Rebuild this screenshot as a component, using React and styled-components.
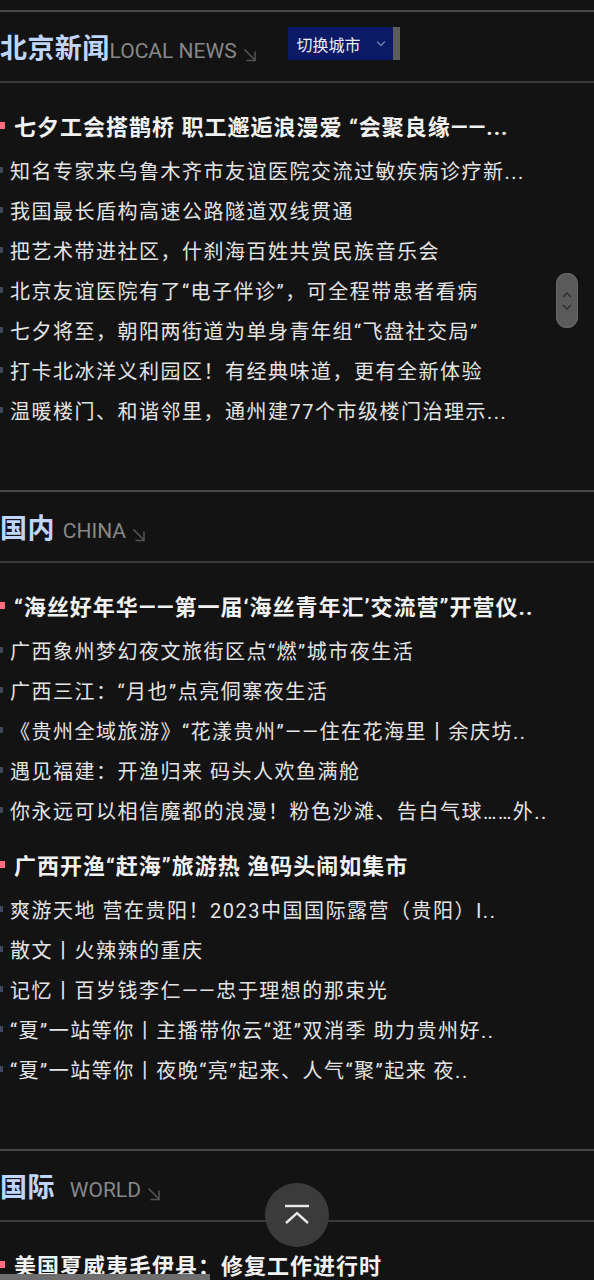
import styled, { createGlobalStyle } from "styled-components";

const GlobalStyle = createGlobalStyle`
  html, body {
    margin: 0;
    padding: 0;
    background: #131313;
  }
  body {
    font-family: Roboto, "Noto Sans CJK SC", sans-serif;
    color: #e6e6e6;
  }
`;

const Page = styled.div`
  width: 594px;
  padding-top: 10px;
  background: #131313;
`;

const Section = styled.section`
  border-top: 2px solid #474747;
`;

const SectionHeader = styled.div`
  height: 69px;
  display: flex;
  align-items: center;
  border-bottom: 2px solid #3a3a3a;
`;

const TitleGroup = styled.div`
  display: flex;
  align-items: baseline;
  gap: ${(p) => p.$gap}px;
`;

const Title = styled.h2`
  margin: 0;
  font-size: 27px;
  font-weight: 700;
  color: #bfd5fa;
  letter-spacing: 0.4px;
`;

const SubTitle = styled.span`
  display: flex;
  align-items: baseline;
  gap: 6px;
  font-size: 21px;
  color: #878787;
  text-transform: uppercase;
`;

const CornerArrow = styled.svg`
  width: 14px;
  height: 14px;
  align-self: center;
  position: relative;
  top: 4px;
`;

const CitySwitch = styled.div`
  display: flex;
  height: 33px;
  margin-left: 31px;
  position: relative;
  top: -3px;
`;

const CityButton = styled.button`
  width: 105px;
  height: 33px;
  display: flex;
  align-items: center;
  justify-content: space-between;
  padding: 0 7px 0 9px;
  border: 0;
  background: #0b1a66;
  color: #ececf4;
  font-family: Roboto, "Noto Sans CJK SC", sans-serif;
  font-size: 16px;
  cursor: pointer;
`;

const CityBar = styled.div`
  width: 7px;
  background: #5c5c5c;
`;

const NewsBody = styled.div`
  padding: 20px 40px 60px 0;
`;

const Headline = styled.div`
  position: relative;
  height: 44px;
  display: flex;
  align-items: center;
  margin-top: ${(p) => (p.$first ? 0 : 12)}px;
  margin-bottom: 3px;
  font-size: 22px;
  font-weight: 700;
  letter-spacing: 1px;
  color: #f2f2f2;

  &::before {
    content: "";
    width: 5px;
    height: 7px;
    margin-right: 9px;
    flex-shrink: 0;
    background: #ff6b80;
  }

  ${(p) =>
    p.$bar &&
    `
    &::after {
      content: "";
      position: absolute;
      left: 0;
      bottom: 6px;
      width: 210px;
      height: 6px;
      background: #6e6e6e;
    }
  `}
`;

const ItemRow = styled.div`
  height: 40px;
  display: flex;
  align-items: center;
  font-size: 20px;
  letter-spacing: 1.5px;
  color: #e4e4e4;

  &::before {
    content: "";
    width: 3px;
    height: 6px;
    margin-right: 7px;
    flex-shrink: 0;
    background: #3f4759;
  }
`;

const Line = styled.span`
  white-space: nowrap;
  overflow: hidden;
  text-overflow: ellipsis;
`;

const ScrollPill = styled.div`
  position: fixed;
  top: 273px;
  right: 16px;
  width: 22px;
  height: 55px;
  border-radius: 11px;
  background: #5a5a5a;
  box-shadow: inset 0 0 0 1px #666;
  display: flex;
  flex-direction: column;
  align-items: center;
  justify-content: center;
  gap: 6px;
`;

const BackTop = styled.button`
  position: fixed;
  left: 265px;
  top: 1183px;
  width: 64px;
  height: 64px;
  border-radius: 50%;
  border: 0;
  background: #3b3b3b;
  display: flex;
  align-items: center;
  justify-content: center;
  padding: 0;
`;

const Arrow = () => (
  <CornerArrow viewBox="0 0 14 14" fill="none" stroke="#555" strokeWidth="1.5">
    <path d="M1.5 1.5 L12 12" />
    <path d="M12 3.5 V12.5 H3.5" />
  </CornerArrow>
);

const sections = [
  {
    title: "北京新闻",
    label: "LOCAL NEWS",
    gap: 0,
    switcher: true,
    groups: [
      {
        head: "七夕工会搭鹊桥 职工邂逅浪漫爱 “会聚良缘——...",
        items: [
          "知名专家来乌鲁木齐市友谊医院交流过敏疾病诊疗新...",
          "我国最长盾构高速公路隧道双线贯通",
          "把艺术带进社区，什刹海百姓共赏民族音乐会",
          "北京友谊医院有了“电子伴诊”，可全程带患者看病",
          "七夕将至，朝阳两街道为单身青年组“飞盘社交局”",
          "打卡北冰洋义利园区！有经典味道，更有全新体验",
          "温暖楼门、和谐邻里，通州建77个市级楼门治理示...",
        ],
      },
    ],
  },
  {
    title: "国内",
    label: "CHINA",
    gap: 8,
    groups: [
      {
        head: "“海丝好年华——第一届‘海丝青年汇’交流营”开营仪..",
        items: [
          "广西象州梦幻夜文旅街区点“燃”城市夜生活",
          "广西三江：“月也”点亮侗寨夜生活",
          "《贵州全域旅游》“花漾贵州”——住在花海里丨余庆坊..",
          "遇见福建：开渔归来 码头人欢鱼满舱",
          "你永远可以相信魔都的浪漫！粉色沙滩、告白气球……外..",
        ],
      },
      {
        head: "广西开渔“赶海”旅游热 渔码头闹如集市",
        items: [
          "爽游天地 营在贵阳！2023中国国际露营（贵阳）I..",
          "散文丨火辣辣的重庆",
          "记忆丨百岁钱李仁——忠于理想的那束光",
          "“夏”一站等你丨主播带你云“逛”双消季 助力贵州好..",
          "“夏”一站等你丨夜晚“亮”起来、人气“聚”起来 夜..",
        ],
      },
    ],
  },
  {
    title: "国际",
    label: "WORLD",
    gap: 15,
    groups: [{ head: "美国夏威夷毛伊县：修复工作进行时", items: [], bar: true }],
  },
];

function NewsSection({ section }) {
  return (
    <Section>
      <SectionHeader>
        <TitleGroup $gap={section.gap}>
          <Title>{section.title}</Title>
          <SubTitle>
            {section.label}
            <Arrow />
          </SubTitle>
        </TitleGroup>
        {section.switcher && (
          <CitySwitch>
            <CityButton>
              切换城市
              <svg width="10" height="7" viewBox="0 0 10 7" fill="none" stroke="#6f7fa6" strokeWidth="1.3">
                <path d="M1 1.5 L5 5.5 L9 1.5" />
              </svg>
            </CityButton>
            <CityBar />
          </CitySwitch>
        )}
      </SectionHeader>
      <NewsBody>
        {section.groups.map((g, i) => (
          <div key={i}>
            <Headline $first={i === 0} $bar={g.bar}>
              <Line>{g.head}</Line>
            </Headline>
            {g.items.map((t) => (
              <ItemRow key={t}>
                <Line>{t}</Line>
              </ItemRow>
            ))}
          </div>
        ))}
      </NewsBody>
    </Section>
  );
}

export default function App() {
  return (
    <Page>
      <GlobalStyle />
      {sections.map((s) => (
        <NewsSection key={s.title} section={s} />
      ))}
      <ScrollPill>
        <svg width="10" height="6" viewBox="0 0 10 6" fill="none" stroke="#2e2e2e" strokeWidth="1.4">
          <path d="M1 5 L5 1 L9 5" />
        </svg>
        <svg width="10" height="6" viewBox="0 0 10 6" fill="none" stroke="#2e2e2e" strokeWidth="1.4">
          <path d="M1 1 L5 5 L9 1" />
        </svg>
      </ScrollPill>
      <BackTop aria-label="回到顶部">
        <svg width="28" height="22" viewBox="0 0 28 22" fill="none" stroke="#e8e8e8" strokeWidth="2.4">
          <path d="M2 2 H26" />
          <path d="M3 19 L14 9 L25 19" />
        </svg>
      </BackTop>
    </Page>
  );
}
